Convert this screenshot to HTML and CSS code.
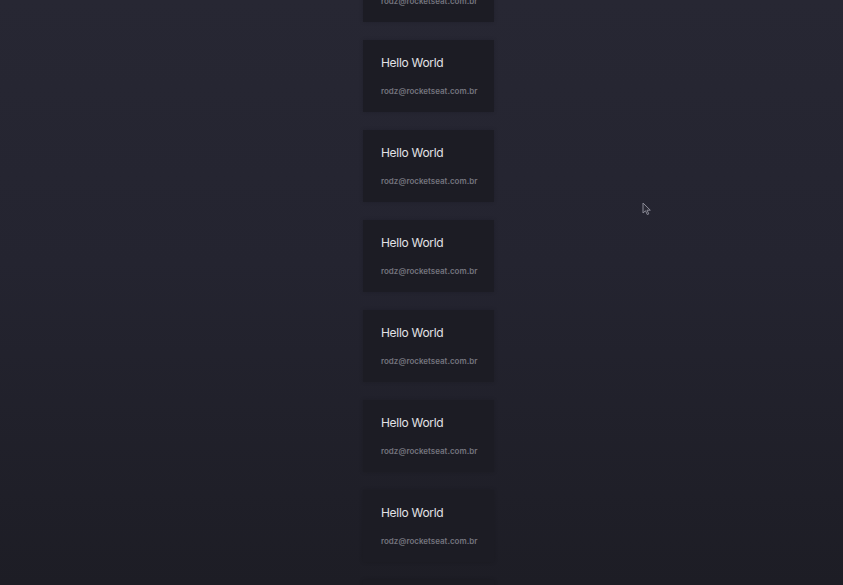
FILE: index.html
```html
<!DOCTYPE html>
<html>
<head>
<meta charset="utf-8">
<link rel="stylesheet" href="styles.css">
</head>
<body>
<main class="page">
  <ul class="list">
    <li class="card"><strong class="name">Hello World</strong><span class="email">rodz@rocketseat.com.br</span></li>
    <li class="card"><strong class="name">Hello World</strong><span class="email">rodz@rocketseat.com.br</span></li>
    <li class="card"><strong class="name">Hello World</strong><span class="email">rodz@rocketseat.com.br</span></li>
    <li class="card"><strong class="name">Hello World</strong><span class="email">rodz@rocketseat.com.br</span></li>
    <li class="card"><strong class="name">Hello World</strong><span class="email">rodz@rocketseat.com.br</span></li>
    <li class="card"><strong class="name">Hello World</strong><span class="email">rodz@rocketseat.com.br</span></li>
    <li class="card"><strong class="name">Hello World</strong><span class="email">rodz@rocketseat.com.br</span></li>
    <li class="card"><strong class="name">Hello World</strong><span class="email">rodz@rocketseat.com.br</span></li>
  </ul>
  <svg class="cursor" width="10" height="14" viewBox="0 0 10 14"><path d="M1 1 L1 11 L3.5 8.8 L5.3 12.6 L6.8 11.9 L5 8.2 L8.3 8.2 Z" fill="#2a2a35" stroke="#8a8a96" stroke-width="1"/></svg>
</main>
</body>
</html>
```
FILE: styles.css
```css
html, body {
  margin: 0;
  padding: 0;
  height: 100%;
  overflow: hidden;
}
body {
  background: linear-gradient(180deg, #272733 0%, #242430 45%, #1d1d25 100%);
  font-family: Inter, "Liberation Sans", sans-serif;
}
.page {
  position: relative;
  height: 585px;
  overflow: hidden;
}
.list {
  list-style: none;
  margin: -50px 0 0 363px;
  padding: 0;
  display: flex;
  flex-direction: column;
  gap: 18px;
}
.card {
  width: 131px;
  height: 72px;
  box-sizing: border-box;
  padding: 15px 18px 0 18px;
  background: #1c1c24;
  box-shadow: 0 0 4px rgba(0,0,0,0.15);
  display: flex;
  flex-direction: column;
}
.name {
  font-size: 12px;
  font-weight: 400;
  color: #e2e2e6;
  line-height: 16px;
  letter-spacing: -0.3px;
}
.email {
  margin-top: 15px;
  font-size: 8px;
  font-weight: 600;
  color: #74747e;
  line-height: 10px;
}
.cursor {
  position: absolute;
  left: 642px;
  top: 202px;
}
```
